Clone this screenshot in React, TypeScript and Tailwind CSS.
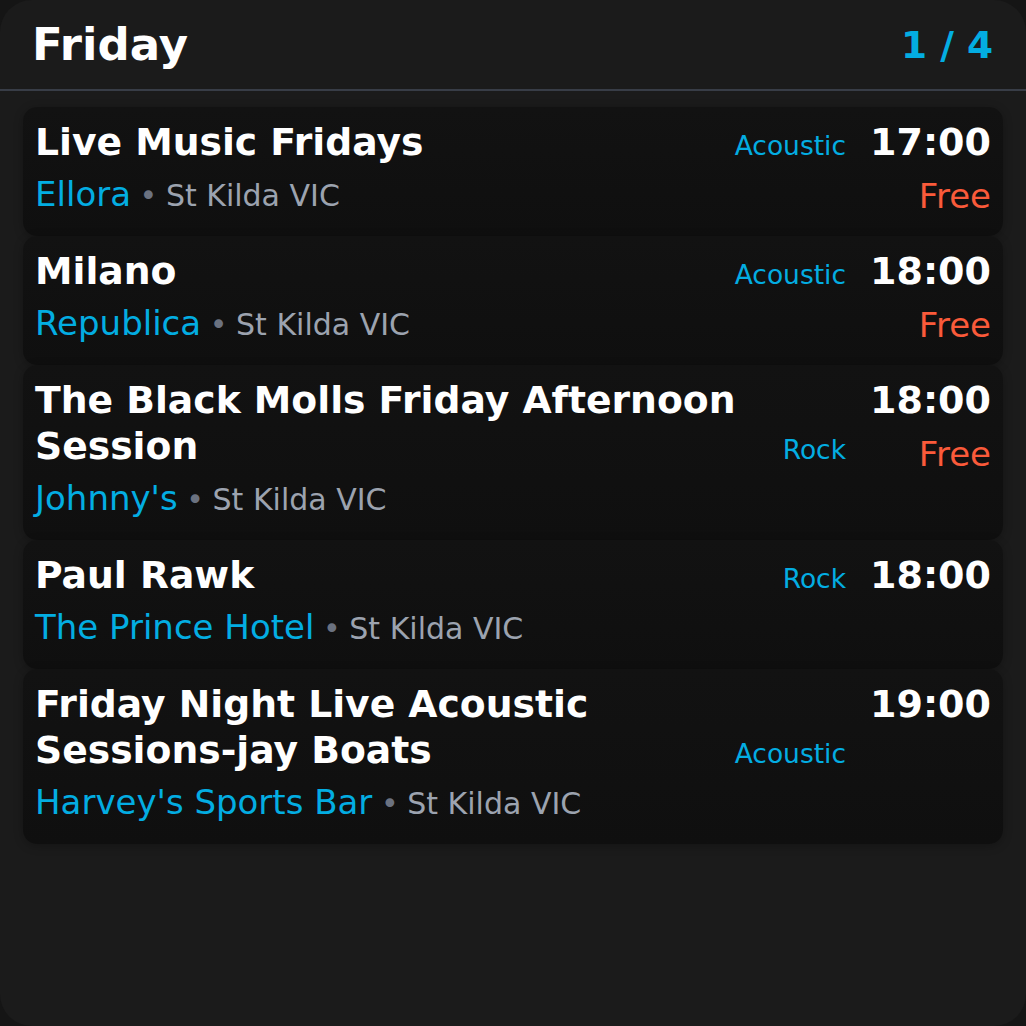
import React from "react";

interface Gig {
  title: string;
  venue: string;
  location: string;
  genre: string;
  time: string;
  price?: string;
}

const gigs: Gig[] = [
  { title: "Live Music Fridays", venue: "Ellora", location: "St Kilda VIC", genre: "Acoustic", time: "17:00", price: "Free" },
  { title: "Milano", venue: "Republica", location: "St Kilda VIC", genre: "Acoustic", time: "18:00", price: "Free" },
  { title: "The Black Molls Friday Afternoon Session", venue: "Johnny's", location: "St Kilda VIC", genre: "Rock", time: "18:00", price: "Free" },
  { title: "Paul Rawk", venue: "The Prince Hotel", location: "St Kilda VIC", genre: "Rock", time: "18:00" },
  { title: "Friday Night Live Acoustic Sessions-jay Boats", venue: "Harvey's Sports Bar", location: "St Kilda VIC", genre: "Acoustic", time: "19:00" },
];

const GigCard: React.FC<{ gig: Gig }> = ({ gig }) => {
  return (
    <div className="rounded-[14px] bg-gradient-to-b from-[#121212] to-[#0f0f0f] px-3 pt-3 pb-4 shadow-[0_2px_10px_rgba(0,0,0,0.25)]">
      <div className="grid grid-cols-[minmax(0,1fr)_auto_auto] gap-x-6">
        <h3 className="col-start-1 row-start-1 text-[37.7px] leading-[46px] font-bold text-white">
          {gig.title}
        </h3>
        <span className="col-start-2 row-start-1 self-end text-[26.5px] leading-[39px] text-[#03ade2]">
          {gig.genre}
        </span>
        <div className="col-start-3 row-start-1 row-span-2 flex flex-col items-end">
          <span className="text-[38px] leading-[46px] font-bold text-white">{gig.time}</span>
          {gig.price && (
            <span className="mt-[7px] text-[34px] leading-[48px] text-[#fa5a3a]">{gig.price}</span>
          )}
        </div>
        <div className="col-start-1 col-span-2 row-start-2 mt-1.5 text-[34px] leading-[47px] whitespace-nowrap">
          <span className="text-[#03ade2]">{gig.venue}</span>
          <span className="text-[27px] text-[#6b7280]">
            {" "}
            <span className="text-[30px]">•</span>{" "}
          </span>
          <span className="text-[30px] text-[#9ca3af]">{gig.location}</span>
        </div>
      </div>
    </div>
  );
};

const App: React.FC = () => {
  return (
    <div className="w-full h-[1026px] bg-[#151515] font-['DejaVu_Sans',sans-serif]">
      <div className="w-full h-full rounded-[32px] bg-[#1b1b1b] overflow-hidden">
        <div className="flex h-[91px] items-center justify-between border-b-2 border-[#383d47] pl-8 pr-[33px]">
          <h1 className="text-[45px] leading-[54px] font-bold text-white">Friday</h1>
          <span className="text-[37.5px] leading-[46px] font-bold text-[#03ade2]">1 / 4</span>
        </div>
        <div className="flex flex-col px-[23px] pt-4">
          {gigs.map((g, i) => (
            <GigCard key={i} gig={g} />
          ))}
        </div>
      </div>
    </div>
  );
};

export default App;
